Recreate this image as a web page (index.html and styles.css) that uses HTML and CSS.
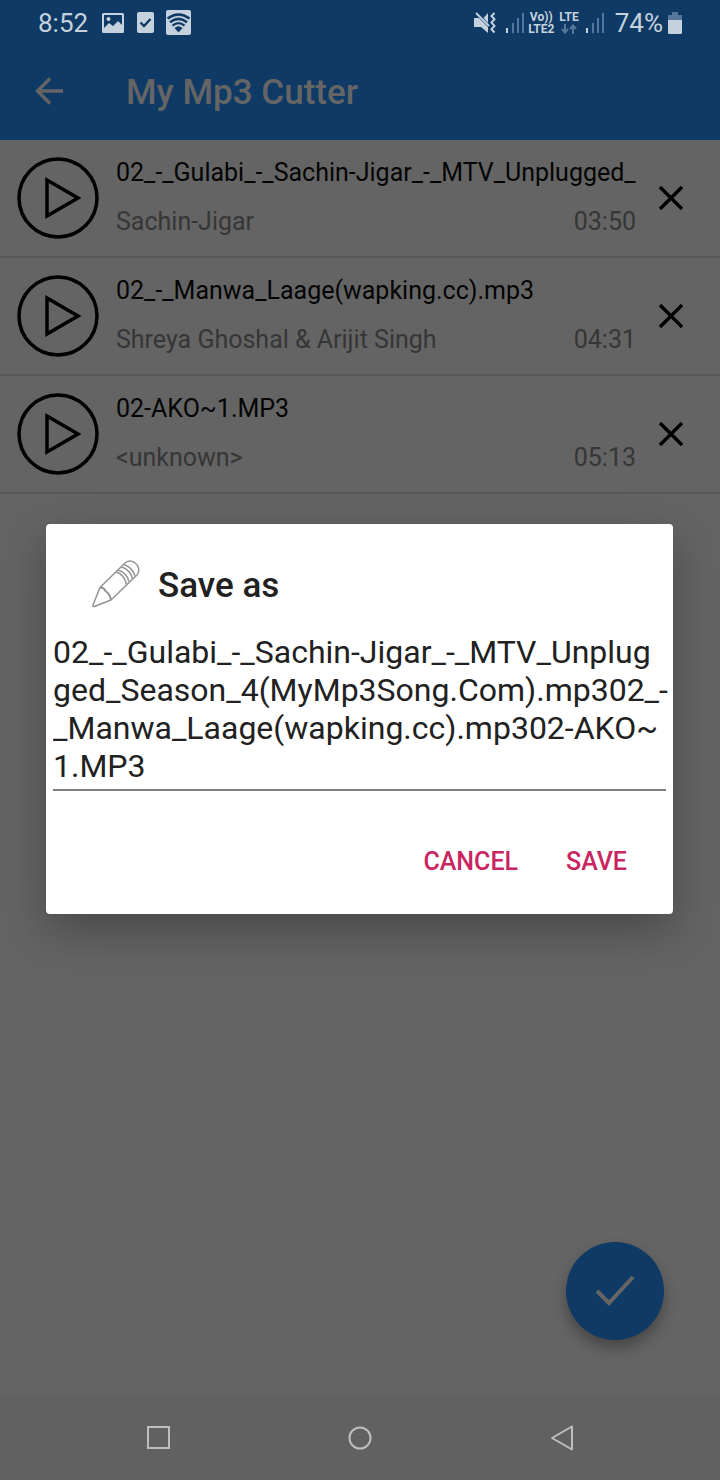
FILE: index.html
```html
<!DOCTYPE html>
<html lang="en">
<head>
<meta charset="utf-8">
<meta name="viewport" content="width=device-width, initial-scale=1">
<title>My Mp3 Cutter</title>
<link rel="stylesheet" href="styles.css">
</head>
<body>
<div class="screen">
  <header class="top">
    <div class="status">
      <div class="status-left">
        <span class="clock">8:52</span>
        <svg class="ic-photo" width="22" height="20" viewBox="0 0 22 20"><path fill="#c5d2de" fill-rule="evenodd" d="M1.500 0h19a1.500 1.500 0 0 1 1.500 1.500v17a1.500 1.500 0 0 1-1.500 1.500h-19a1.500 1.500 0 0 1-1.500-1.500v-17a1.500 1.500 0 0 1 1.500-1.500zM2 2v13l5-5 4 3 5-5 4 4V2z"/><circle cx="6.500" cy="6" r="2" fill="#c5d2de"/></svg>
        <svg class="ic-task" width="17" height="21" viewBox="0 0 17 21"><rect width="17" height="21" rx="2" fill="#c5d2de"/><path d="M3.500 10.500l3.500 3.500 6.500-7" fill="none" stroke="#0e3a65" stroke-width="2.400"/></svg>
        <svg class="ic-wifi" width="25" height="25" viewBox="0 0 25 25"><rect width="25" height="25" rx="2" fill="#c5d2de"/><g fill="none" stroke="#0e3a65" stroke-width="2.600"><path d="M1.500 8.500Q12.500 0.500 23.500 8.500"/><path d="M4 12.200Q12.500 5.500 21 12.200"/><path d="M6.500 15.700Q12.500 10.500 18.500 15.700" stroke-width="2.300"/></g><path d="M8.500 18q4-3.500 8 0l-4 4.500z" fill="#0e3a65"/></svg>
      </div>
      <div class="status-right">
        <svg width="22" height="22" viewBox="0 0 22 22"><path fill="#c5d2de" d="M0 6h5l9 9v6l-7-6H0zM14 1v10L9.500 6z"/><path d="M2 1l13 13" stroke="#c5d2de" stroke-width="2"/><path d="M20.500 1l-3 3 3 3.300-3 3.300 3 3.300-3 3.300 3 3.300" fill="none" stroke="#c5d2de" stroke-width="2"/></svg>
        <svg class="ic-signal" width="19" height="20" viewBox="0 0 19 20"><path fill="#c5d2de" d="M0 15h2v5H0z"/><path fill="#55779a" d="M6 10h2v10H6zM11 5h2v15h-2zM16 0h2v20h-2z"/></svg>
        <span class="net"><span>Vo))</span><span>LTE2</span></span>
        <span class="net net-data"><span>LTE</span><svg width="16" height="12" viewBox="0 0 16 12"><path d="M4 1v8M1 6l3 3.500L7 6M12 11V3M9 6l3-3.500L15 6" fill="none" stroke="#55779a" stroke-width="2"/></svg></span>
        <svg class="ic-signal2" width="19" height="20" viewBox="0 0 19 20"><path fill="#c5d2de" d="M0 15h2v5H0z"/><path fill="#55779a" d="M6 10h2v10H6zM11 5h2v15h-2zM16 0h2v20h-2z"/></svg>
        <span class="battery-text">74%</span>
        <svg class="ic-battery" width="14" height="22" viewBox="0 0 14 22"><path fill="#55779a" d="M4 0h6v3h4v5H0V3h4z"/><path fill="#c5d2de" d="M0 8h14v12.500q0 1.500-1.500 1.500h-11Q0 22 0 20.500z"/></svg>
      </div>
    </div>
    <div class="toolbar">
      <button class="back" type="button" aria-label="Back"><svg width="28" height="28" viewBox="0 0 28 28"><path d="M28 14H3M15 1.500L2.500 14 15 26.500" fill="none" stroke="#656565" stroke-width="3.400"/></svg></button>
      <h1 class="title">My Mp3 Cutter</h1>
    </div>
  </header>

  <main class="content">
    <ul class="tracks">
      <li class="track">
        <button class="play" type="button" aria-label="Play"><svg width="82" height="82" viewBox="0 0 82 82"><circle cx="41" cy="41" r="39" fill="none" stroke="#000" stroke-width="3.500"/><path d="M30 23v36l31-18z" fill="none" stroke="#000" stroke-width="3.500"/></svg></button>
        <div class="info"><div class="name">02_-_Gulabi_-_Sachin-Jigar_-_MTV_Unplugged_</div><div class="meta"><span>Sachin-Jigar</span><span>03:50</span></div></div>
        <button class="remove" type="button" aria-label="Remove"><svg width="24" height="24" viewBox="0 0 24 24"><path d="M1 1l22 22M23 1L1 23" stroke="#000" stroke-width="3.400"/></svg></button>
      </li>
      <li class="track">
        <button class="play" type="button" aria-label="Play"><svg width="82" height="82" viewBox="0 0 82 82"><circle cx="41" cy="41" r="39" fill="none" stroke="#000" stroke-width="3.500"/><path d="M30 23v36l31-18z" fill="none" stroke="#000" stroke-width="3.500"/></svg></button>
        <div class="info"><div class="name">02_-_Manwa_Laage(wapking.cc).mp3</div><div class="meta"><span>Shreya Ghoshal &amp; Arijit Singh</span><span>04:31</span></div></div>
        <button class="remove" type="button" aria-label="Remove"><svg width="24" height="24" viewBox="0 0 24 24"><path d="M1 1l22 22M23 1L1 23" stroke="#000" stroke-width="3.400"/></svg></button>
      </li>
      <li class="track">
        <button class="play" type="button" aria-label="Play"><svg width="82" height="82" viewBox="0 0 82 82"><circle cx="41" cy="41" r="39" fill="none" stroke="#000" stroke-width="3.500"/><path d="M30 23v36l31-18z" fill="none" stroke="#000" stroke-width="3.500"/></svg></button>
        <div class="info"><div class="name">02-AKO~1.MP3</div><div class="meta"><span>&lt;unknown&gt;</span><span>05:13</span></div></div>
        <button class="remove" type="button" aria-label="Remove"><svg width="24" height="24" viewBox="0 0 24 24"><path d="M1 1l22 22M23 1L1 23" stroke="#000" stroke-width="3.400"/></svg></button>
      </li>
    </ul>
    <button class="fab" type="button" aria-label="Done"><svg width="40" height="32" viewBox="0 0 40 32"><path d="M2 16l12 12L38 2" fill="none" stroke="#656565" stroke-width="4"/></svg></button>
  </main>

  <nav class="navbar">
    <button type="button" aria-label="Recent apps"><svg width="26" height="26" viewBox="0 0 26 26"><rect x="2" y="2" width="21" height="21" fill="none" stroke="#bebebe" stroke-width="2"/></svg></button>
    <button type="button" aria-label="Home"><svg width="26" height="26" viewBox="0 0 26 26"><circle cx="13" cy="13" r="10.500" fill="none" stroke="#bebebe" stroke-width="2"/></svg></button>
    <button type="button" aria-label="Back"><svg width="26" height="26" viewBox="0 0 26 26"><path d="M24 1.500v23L4 13z" fill="none" stroke="#bebebe" stroke-width="2" stroke-linejoin="round"/></svg></button>
  </nav>

  <div class="overlay">
    <form class="dialog" role="dialog" aria-labelledby="dialog-title">
      <div class="dialog-head">
        <svg width="50" height="50" viewBox="0 0 50 50"><g fill="none" stroke="#949494" stroke-width="1.500" stroke-linejoin="round"><path d="M2 46L9 28.500 33.500 4.500Q38 0 43.500 3.500 50 8 46.500 15.500L20 41 3.500 47.500Q1.500 48 2 46z"/><path d="M9 28.500q4 0 5.500 3.500 4.500 3 5.500 9" stroke-width="2"/><path d="M25 13q8 2 10.500 12.500M27 11q8.500 2.500 11 11.500M30.500 8q8.500 2.500 11 11.500M33 5.500q8.500 3 11 11.500"/></g></svg>
        <h2 class="dialog-title" id="dialog-title">Save as</h2>
      </div>
      <div class="field">
        <textarea class="filename" rows="4" aria-labelledby="dialog-title" spellcheck="false">02_-_Gulabi_-_Sachin-Jigar_-_MTV_Unplug
ged_Season_4(MyMp3Song.Com).mp302_-
_Manwa_Laage(wapking.cc).mp302-AKO~
1.MP3</textarea>
      </div>
      <div class="actions">
        <button class="action" type="button">CANCEL</button>
        <button class="action" type="button">SAVE</button>
      </div>
    </form>
  </div>
</div>
</body>
</html>
```
FILE: styles.css
```css
* { box-sizing: border-box; }
body { margin: 0; background: #646464; font-family: Roboto, "Liberation Sans", sans-serif; }
button { padding: 0; border: 0; background: none; font: inherit; color: inherit; cursor: pointer; }
svg { display: block; flex: none; }

.screen { position: relative; display: flex; flex-direction: column; min-height: 100vh; }

.top { background: #0e3a65; }
.status { display: flex; justify-content: space-between; align-items: center; height: 42px; padding: 3px 38px 0; color: #c5d2de; }
.status-left, .status-right { display: flex; align-items: center; }
.clock, .battery-text { font-size: 26px; line-height: 30px; }
.ic-photo { margin-left: 14px; }
.ic-task { margin-left: 13px; }
.ic-wifi { margin-left: 12px; }
.ic-signal { margin-left: 10px; }
.ic-signal2 { margin-left: 7px; }
.battery-text { margin-left: 10px; }
.ic-battery { margin-left: 5px; }
.net { display: flex; flex-direction: column; align-items: center; margin-left: 3px; font-size: 12px; line-height: 12px; font-weight: 700; }
.net-data { margin-left: 5px; }
.toolbar { display: flex; align-items: center; gap: 63px; height: 98px; padding: 0 35px; }
.title { margin: 0; padding-top: 4px; font-size: 35px; line-height: 40px; font-weight: 500; color: #656565; }

.content { flex: 1; }
.tracks { margin: 0; padding: 0; list-style: none; }
.track { display: flex; align-items: center; height: 118px; padding: 0 37px 0 17px; border-bottom: 2px solid #585858; }
.info { flex: 1; min-width: 0; margin: 0 23px 0 17px; padding-bottom: 2px; font-size: 25px; line-height: 29px; }
.name { overflow: hidden; white-space: nowrap; color: #050505; }
.meta { display: flex; justify-content: space-between; margin-top: 20px; color: #363636; }

.fab { position: absolute; right: 56px; bottom: 140px; display: grid; place-items: center; width: 98px; height: 98px; border-radius: 50%; background: #0e3a65; box-shadow: 0 8px 14px rgba(0, 0, 0, .3); }

.navbar { display: flex; justify-content: space-around; align-items: center; height: 84px; padding: 0 58px; background: #616161; }

.overlay { position: absolute; inset: 42px 0 84px; display: grid; place-items: center; padding: 0 47px 0 46px; }
.dialog { width: 100%; padding: 32px 7px 19px; border-radius: 4px; background: #fff; box-shadow: 0 16px 44px rgba(0, 0, 0, .28); }
.dialog-head { display: flex; align-items: center; gap: 17px; padding-left: 38px; }
.dialog-title { margin: 0; padding-top: 4px; font-size: 35px; line-height: 52px; font-weight: 500; color: #212121; }
.field { margin: 21px 0 0; border-bottom: 2px solid #7f7f7f; }
.filename { display: block; width: calc(100% + 7px); height: 156px; padding: 0; border: 0; outline: 0; resize: none; overflow: hidden; background: none; font: 32px/38px Roboto, "Liberation Sans", sans-serif; color: #212121; white-space: pre; }
.actions { display: flex; justify-content: flex-end; gap: 20px; margin-top: 37px; padding-right: 25px; }
.action { height: 67px; padding: 0 14px; font-size: 25px; font-weight: 500; color: #c92560; }
```
